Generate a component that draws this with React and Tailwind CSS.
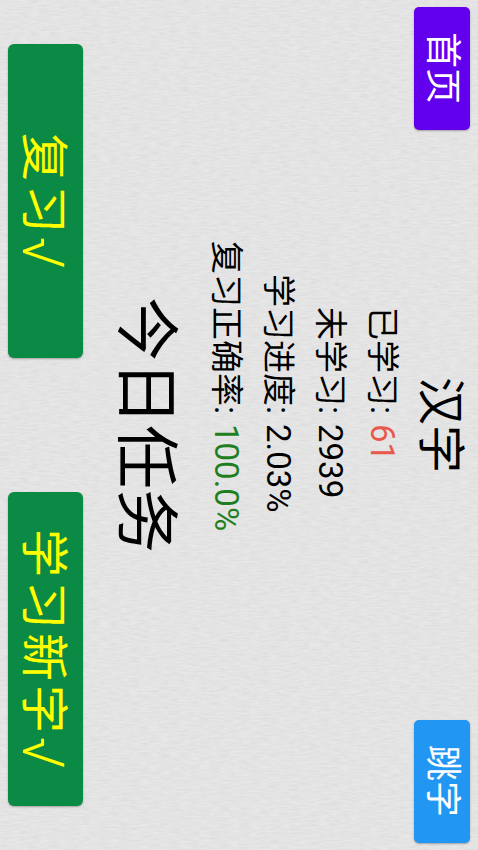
import React from "react";

const stats = [
  { label: "已学习:", value: "61", color: "text-[#e8574a]" },
  { label: "未学习:", value: "2939", color: "text-black" },
  { label: "学习进度:", value: "2.03%", color: "text-black" },
  { label: "复习正确率:", value: "100.0%", color: "text-[#1f7f1f]" },
];

const NavButton = ({ children, color }) => (
  <button className={`w-[56px] h-[123px] rounded-[5px] ${color} text-white text-[36px] font-normal leading-none flex items-center justify-center shadow-[0_1px_2px_rgba(0,0,0,0.3)]`}>
    {children}
  </button>
);

const TaskButton = ({ children }) => (
  <button className="w-[75px] h-[314px] pr-[5px] rounded-[6px] bg-[#0b8a45] text-[#ffff00] text-[48px] tracking-[4px] leading-none flex items-center justify-center shadow-[0_1px_2px_rgba(0,0,0,0.3)]">
    <span>{children}</span>
    <span className="text-[58px] font-light tracking-normal">√</span>
  </button>
);

// the app is shown sideways: vertical-rl turns rows into top-to-bottom, columns into right-to-left
const App = () => {
  return (
    <div className="relative w-[478px] h-[850px] overflow-hidden bg-[#e7e7e7] text-black [writing-mode:vertical-rl] [text-orientation:sideways] font-['Roboto','Noto_Sans_CJK_SC',sans-serif]">
      <svg className="absolute inset-0 w-full h-full" aria-hidden="true">
        <filter id="paper">
          <feTurbulence type="fractalNoise" baseFrequency="0.1 0.55" numOctaves="3" seed="4" />
          <feColorMatrix values="0 0 0 0 0.55  0 0 0 0 0.55  0 0 0 0 0.55  0.5 0 0 0 -0.15" />
        </filter>
        <rect width="100%" height="100%" filter="url(#paper)" />
      </svg>

      <div className="relative w-full h-full flex flex-col">
        <div className="mr-[8px] w-[56px] pt-[7px] pb-[7px] h-full flex flex-row items-center justify-between">
          <NavButton color="bg-[#6200ee]">首页</NavButton>
          <div className="mr-[4px] text-[48px] leading-none">汉字</div>
          <NavButton color="bg-[#2196f3]">跳字</NavButton>
        </div>

        <div className="mr-[6px] flex flex-col text-[33px] leading-[52px]">
          {stats.map((s) => (
            <div key={s.label} className="flex flex-row w-[52px]">
              <span className="h-[414px] text-end">{s.label}</span>
              <span className={`pt-[10px] ${s.color}`}>{s.value}</span>
            </div>
          ))}
        </div>

        <div className="mr-[15px] w-[80px] text-[64px] leading-[80px] text-center">今日任务</div>

        <div className="mr-auto ml-[8px] pt-[44px] pb-[44px] h-full flex flex-row justify-between">
          <TaskButton>复习</TaskButton>
          <TaskButton>学习新字</TaskButton>
        </div>
      </div>
    </div>
  );
};

export default App;
